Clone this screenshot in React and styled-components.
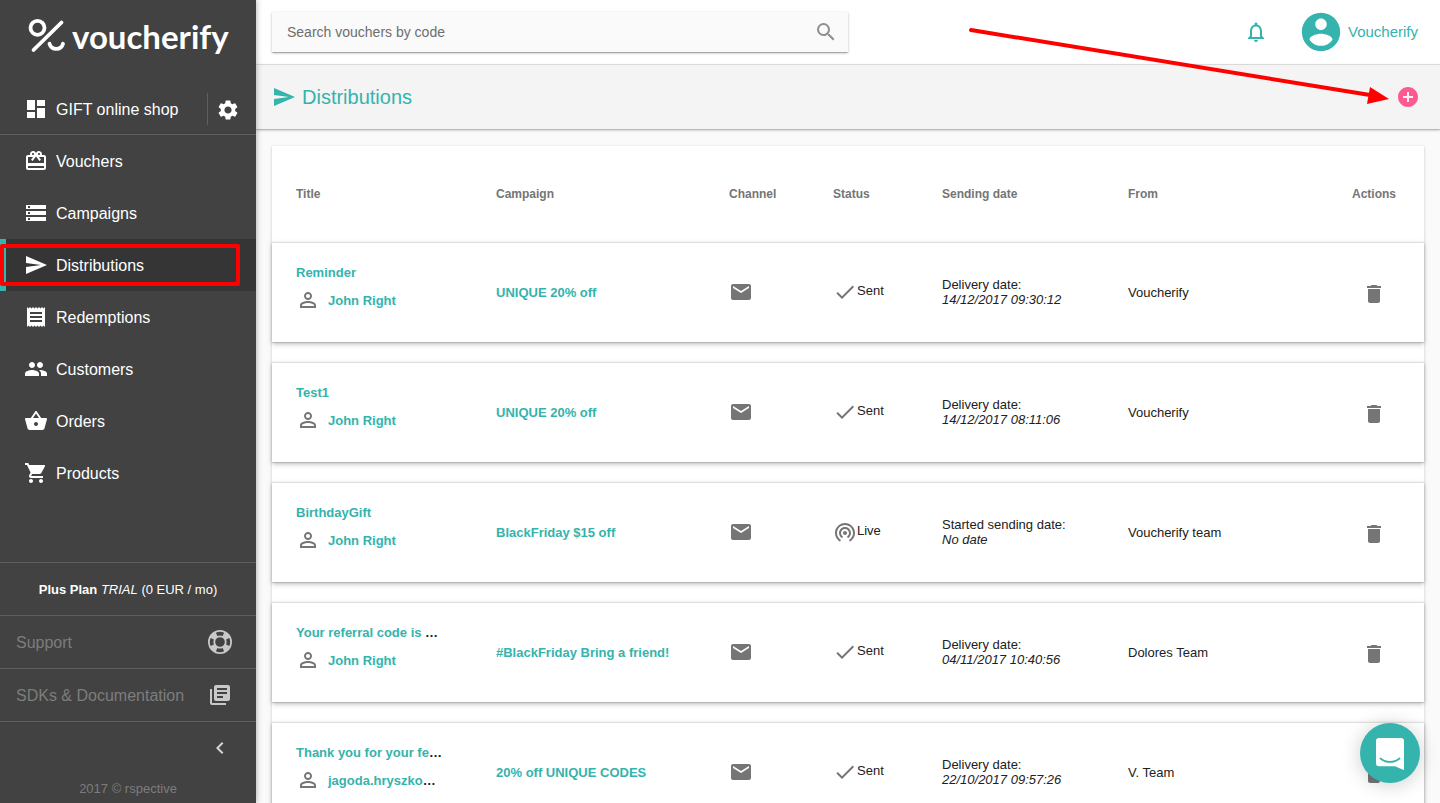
import React from "react";
import styled, { createGlobalStyle, css } from "styled-components";
import {
  MdDashboard,
  MdSettings,
  MdCardGiftcard,
  MdStorage,
  MdSend,
  MdReceipt,
  MdPeople,
  MdShoppingCart,
  MdLibraryBooks,
  MdChevronLeft,
  MdSearch,
  MdNotificationsNone,
  MdAddCircle,
  MdPersonOutline,
  MdEmail,
  MdDone,
  MdWifiTethering,
  MdDelete,
} from "react-icons/md";

const teal = "#35b3ad";
const lineDark = "#5e5e5e";

const GlobalStyle = createGlobalStyle`
  *, *::before, *::after { box-sizing: border-box; }
  body {
    margin: 0;
    background: #fafafa;
    color: #212121;
    font-family: "Liberation Sans", Arial, sans-serif;
    font-size: 13px;
    line-height: 15px;
  }
  a { color: inherit; text-decoration: none; }
  button { border: 0; padding: 0; background: none; font: inherit; color: inherit; cursor: pointer; }
  svg { display: block; flex: none; }
`;

const Shell = styled.div`
  position: relative;
  display: flex;
  height: 100vh;
  overflow: hidden;
`;

/* Sidebar */

const Sidebar = styled.aside`
  z-index: 2;
  display: flex;
  flex: none;
  flex-direction: column;
  width: 256px;
  background: #424242;
  color: #fff;
  box-shadow: 0 0 6px rgba(0, 0, 0, 0.35);
`;

const Brand = styled.a`
  display: flex;
  align-items: center;
  gap: 6px;
  height: 84px;
  padding: 0 0 12px 28px;
`;

const Wordmark = styled.span`
  font-family: Lato, sans-serif;
  font-size: 33px;
  font-weight: 700;
  line-height: 40px;
`;

const ProjectRow = styled.div`
  display: flex;
  align-items: center;
  height: 51px;
  border-bottom: 1px solid ${lineDark};
`;

const navRow = css`
  display: flex;
  align-items: center;
  gap: 8px;
  padding-left: 24px;
  font-size: 16px;
  line-height: 20px;
`;

const NavLabel = styled.span`
  padding-top: 2px;
`;

const ProjectLink = styled.a`
  ${navRow}
  flex: 1;
`;

const SettingsButton = styled.button`
  display: flex;
  align-items: center;
  height: 32px;
  padding: 2px 16px 0 8px;
  border-left: 1px solid ${lineDark};
`;

const NavList = styled.ul`
  flex: 1;
  margin: 0;
  padding: 0;
  list-style: none;
`;

const NavItem = styled.li`
  position: relative;
`;

const NavLink = styled.a`
  ${navRow}
  height: 52px;
  ${(p) =>
    p.$active &&
    css`
      background: #353535;
      box-shadow: inset 6px 0 ${teal};
    `}
`;

const Highlight = styled.span`
  position: absolute;
  inset: 5px 16px 5px 0;
  border: 4px solid #f00;
  border-radius: 2px;
  pointer-events: none;
`;

const Plan = styled.p`
  margin: 0;
  height: 53px;
  border-top: 1px solid ${lineDark};
  line-height: 54px;
  text-align: center;
`;

const HelpLink = styled.a`
  display: flex;
  align-items: center;
  justify-content: space-between;
  height: 53px;
  padding: 0 24px 0 16px;
  border-top: 1px solid ${lineDark};
  color: #7d7d7d;
  font-size: 16px;

  svg { color: #c8c8c8; }
`;

const CollapseRow = styled.div`
  display: flex;
  justify-content: flex-end;
  align-items: center;
  height: 52px;
  padding-right: 24px;
  border-top: 1px solid ${lineDark};
`;

const Copyright = styled.small`
  padding-top: 2px;
  color: #7d7d7d;
  font-size: 13px;
  line-height: 28px;
  text-align: center;
`;

/* Main area */

const Main = styled.main`
  flex: 1;
  min-width: 0;
  overflow-y: auto;
  scrollbar-width: none;
`;

const TopBar = styled.header`
  display: flex;
  align-items: center;
  justify-content: space-between;
  height: 65px;
  padding: 0 16px;
  border-bottom: 1px solid #e3e3e3;
  background: #fff;
`;

const SearchBox = styled.form`
  display: flex;
  align-items: center;
  width: 50%;
  height: 40px;
  padding: 0 10px 0 15px;
  background: #fafafa;
  box-shadow: 0 1px 3px rgba(0, 0, 0, 0.2), 0 1px 1px rgba(0, 0, 0, 0.14),
    0 2px 1px -1px rgba(0, 0, 0, 0.12);
`;

const SearchInput = styled.input`
  flex: 1;
  min-width: 0;
  padding: 0;
  border: 0;
  outline: 0;
  background: transparent;
  font: inherit;
  font-size: 14px;

  &::placeholder { color: #6e6e6e; opacity: 1; }
`;

const IconButton = styled.button`
  display: flex;
  color: ${(p) => p.$color};
`;

const Account = styled.div`
  display: flex;
  align-items: center;
  gap: 30px;
  padding-right: 6px;
`;

const Profile = styled.a`
  display: flex;
  align-items: center;
  gap: 4px;
  color: ${teal};
  font-size: 15px;
`;

const ProfileName = styled.span`
  padding-bottom: 2px;
`;

const TitleBar = styled.div`
  display: flex;
  align-items: center;
  justify-content: space-between;
  height: 64px;
  padding: 0 20px 0 16px;
  background: #f4f4f4;
  box-shadow: 0 1px 3px rgba(0, 0, 0, 0.25), 0 1px 1px rgba(0, 0, 0, 0.12);
`;

const Title = styled.h1`
  display: flex;
  align-items: center;
  gap: 6px;
  margin: 0;
  color: ${teal};
  font-size: 20px;
  font-weight: 400;
  line-height: 24px;
`;

const Card = styled.section`
  margin: 17px 16px;
  background: #fff;
  box-shadow: 0 1px 3px rgba(0, 0, 0, 0.2);
`;

const Table = styled.table`
  width: 100%;
  table-layout: fixed;
  border-spacing: 0 20px;
`;

const Col = styled.col`
  width: ${(p) => p.$w};
`;

const HeadCell = styled.th`
  height: 56px;
  padding: 0 0 0 ${(p) => (p.$first ? "24px" : "0")};
  color: #757575;
  font-size: 12px;
  text-align: ${(p) => (p.$center ? "center" : "left")};
`;

const Row = styled.tr`
  background: #fff;
  box-shadow: 0 2px 5px rgba(0, 0, 0, 0.26), 0 1px 1px rgba(0, 0, 0, 0.12);
`;

const Cell = styled.td`
  height: 100px;
  padding: 0 0 0 ${(p) => (p.$first ? "24px" : "0")};
  border-top: 1px solid #e0e0e0;
  vertical-align: middle;
`;

const BoldLink = styled.a`
  color: ${teal};
  font-weight: 700;
`;

const Ellipsis = styled.span`
  color: #212121;
`;

const TitleStack = styled.div`
  display: flex;
  flex-direction: column;
  gap: 8px;
  padding-bottom: 8px;
`;

const Person = styled.div`
  display: flex;
  align-items: center;
  gap: 8px;
  height: 24px;

  svg { color: #757575; }
`;

const Channel = styled.div`
  padding-bottom: 2px;
  color: #757575;
`;

const Status = styled.div`
  display: flex;
  align-items: center;
  padding-bottom: 2px;

  svg { color: #757575; }
`;

const StatusText = styled.span`
  padding-bottom: 2px;
`;

const Sending = styled.div`
  display: flex;
  flex-direction: column;
  padding-bottom: 2px;
`;

const DeleteButton = styled(IconButton)`
  margin: 2px auto 0;
`;

const ChatButton = styled.button`
  position: fixed;
  right: 20px;
  bottom: 20px;
  z-index: 3;
  display: flex;
  align-items: center;
  justify-content: center;
  width: 60px;
  height: 60px;
  padding-top: 2px;
  border-radius: 50%;
  background: ${teal};
  box-shadow: 0 2px 20px rgba(0, 0, 0, 0.2);
`;

const Pointer = styled.svg`
  position: absolute;
  top: 24px;
  right: 48px;
  z-index: 4;
  pointer-events: none;
`;

function LogoMark() {
  return (
    <svg width="38" height="36" viewBox="0 0 38 36" fill="none" stroke="#fff" strokeWidth="3.8" strokeLinecap="round">
      <circle cx="9.500" cy="9.800" r="7" />
      <path d="M33.500 4.500L5.500 32" />
      <path d="M21.500 25.800a7 7 0 0 0 13.500 0" />
    </svg>
  );
}

function BasketIcon({ size }) {
  return (
    <svg width={size} height={size} viewBox="0 0 24 24" fill="currentColor">
      <path d="M17.21 9l-4.38-6.56c-.19-.28-.51-.42-.83-.42-.32 0-.64.14-.83.43L6.790 9H2c-.55 0-1 .45-1 1 0 .09.01.18.04.27l2.540 9.270c.23.84 1 1.460 1.920 1.460h13c.92 0 1.690-.62 1.930-1.460l2.540-9.270L23 10c0-.55-.45-1-1-1h-4.790zM9 9l3-4.400L15 9H9zm3 8c-1.100 0-2-.9-2-2s.9-2 2-2 2 .9 2 2-.9 2-2 2z" />
    </svg>
  );
}

function AvatarIcon() {
  return (
    <svg width="46" height="46" viewBox="0 0 24 24" fill="currentColor">
      <path d="M12 2C6.480 2 2 6.480 2 12s4.480 10 10 10 10-4.480 10-10S17.520 2 12 2zm0 3c1.660 0 3 1.340 3 3s-1.340 3-3 3-3-1.340-3-3 1.340-3 3-3zm0 14.200c-2.500 0-4.710-1.280-6-3.220.03-1.990 4-3.080 6-3.080 1.990 0 5.970 1.090 6 3.080-1.290 1.940-3.500 3.220-6 3.220z" />
    </svg>
  );
}

function Lifebuoy() {
  return (
    <svg width="24" height="24" viewBox="2 2 20 20" fill="currentColor">
      <path d="M19.79,15.41C20.74,13.24 20.74,10.74 19.79,8.59L17.05,9.83C17.65,11.21 17.65,12.78 17.06,14.17L19.79,15.41M15.42,4.21C13.25,3.26 10.76,3.26 8.59,4.21L9.83,6.94C11.22,6.35 12.79,6.35 14.18,6.95L15.42,4.21M4.21,8.58C3.26,10.76 3.26,13.24 4.21,15.42L6.95,14.17C6.35,12.79 6.35,11.21 6.95,9.82L4.21,8.58M8.59,19.79C10.76,20.74 13.25,20.74 15.42,19.78L14.18,17.05C12.8,17.65 11.22,17.65 9.84,17.06L8.59,19.79M12,2A10,10 0 0,1 22,12A10,10 0 0,1 12,22A10,10 0 0,1 2,12A10,10 0 0,1 12,2M12,8A4,4 0 0,0 8,12A4,4 0 0,0 12,16A4,4 0 0,0 16,12A4,4 0 0,0 12,8Z" />
    </svg>
  );
}

function ChatIcon() {
  return (
    <svg width="28" height="32" viewBox="0 0 28 32">
      <path fill="#fff" d="M3 0h22a3 3 0 0 1 3 3v29c-3-1-6-2.500-9-3.700H3a3 3 0 0 1-3-3V3a3 3 0 0 1 3-3z" />
      <path d="M4.500 20.500c5.500 4.600 13.500 4.600 19 0" fill="none" stroke={teal} strokeWidth="1.800" strokeLinecap="round" />
    </svg>
  );
}

const navItems = [
  { label: "Vouchers", Icon: MdCardGiftcard },
  { label: "Campaigns", Icon: MdStorage },
  { label: "Distributions", Icon: MdSend, active: true },
  { label: "Redemptions", Icon: MdReceipt },
  { label: "Customers", Icon: MdPeople },
  { label: "Orders", Icon: BasketIcon },
  { label: "Products", Icon: MdShoppingCart },
];

const columns = [
  { label: "Title", width: "224px" },
  { label: "Campaign", width: "233px" },
  { label: "Channel", width: "104px" },
  { label: "Status", width: "109px" },
  { label: "Sending date", width: "186px" },
  { label: "From", width: "auto" },
  { label: "Actions", width: "100px" },
];

const distributions = [
  { title: "Reminder", person: "John Right", campaign: "UNIQUE 20% off", status: "Sent", note: "Delivery date:", date: "14/12/2017 09:30:12", from: "Voucherify" },
  { title: "Test1", person: "John Right", campaign: "UNIQUE 20% off", status: "Sent", note: "Delivery date:", date: "14/12/2017 08:11:06", from: "Voucherify" },
  { title: "BirthdayGift", person: "John Right", campaign: "BlackFriday $15 off", status: "Live", note: "Started sending date:", date: "No date", from: "Voucherify team" },
  { title: "Your referral code is …", person: "John Right", campaign: "#BlackFriday Bring a friend!", status: "Sent", note: "Delivery date:", date: "04/11/2017 10:40:56", from: "Dolores Team" },
  { title: "Thank you for your fe…", person: "jagoda.hryszko…", campaign: "20% off UNIQUE CODES", status: "Sent", note: "Delivery date:", date: "22/10/2017 09:57:26", from: "V. Team" },
];

/* A link whose shortened text ends in a dark ellipsis. */
function ShortLink({ text }) {
  const shortened = text.endsWith("…");
  return (
    <BoldLink href="#">
      {shortened ? text.slice(0, -1) : text}
      {shortened && <Ellipsis>…</Ellipsis>}
    </BoldLink>
  );
}

function DistributionRow({ item }) {
  const StatusIcon = item.status === "Live" ? MdWifiTethering : MdDone;
  return (
    <Row>
      <Cell $first>
        <TitleStack>
          <ShortLink text={item.title} />
          <Person>
            <MdPersonOutline size={24} />
            <ShortLink text={item.person} />
          </Person>
        </TitleStack>
      </Cell>
      <Cell>
        <BoldLink href="#">{item.campaign}</BoldLink>
      </Cell>
      <Cell>
        <Channel>
          <MdEmail size={24} />
        </Channel>
      </Cell>
      <Cell>
        <Status>
          <StatusIcon size={24} />
          <StatusText>{item.status}</StatusText>
        </Status>
      </Cell>
      <Cell>
        <Sending>
          <span>{item.note}</span>
          <em>{item.date}</em>
        </Sending>
      </Cell>
      <Cell>{item.from}</Cell>
      <Cell>
        <DeleteButton type="button" $color="#757575" aria-label="Delete">
          <MdDelete size={24} />
        </DeleteButton>
      </Cell>
    </Row>
  );
}

export default function App() {
  return (
    <>
      <GlobalStyle />
      <Shell>
        <Sidebar>
          <Brand href="#">
            <LogoMark />
            <Wordmark>voucherify</Wordmark>
          </Brand>
          <ProjectRow>
            <ProjectLink href="#">
              <MdDashboard size={24} />
              <NavLabel>GIFT online shop</NavLabel>
            </ProjectLink>
            <SettingsButton type="button" aria-label="Settings">
              <MdSettings size={24} />
            </SettingsButton>
          </ProjectRow>
          <NavList>
            {navItems.map(({ label, Icon, active }) => (
              <NavItem key={label}>
                <NavLink href="#" $active={active}>
                  <Icon size={24} />
                  <NavLabel>{label}</NavLabel>
                </NavLink>
                {active && <Highlight />}
              </NavItem>
            ))}
          </NavList>
          <Plan>
            <strong>Plus Plan</strong> <em>TRIAL</em> (0 EUR / mo)
          </Plan>
          <HelpLink href="#">
            Support
            <Lifebuoy />
          </HelpLink>
          <HelpLink href="#">
            SDKs &amp; Documentation
            <MdLibraryBooks size={24} />
          </HelpLink>
          <CollapseRow>
            <IconButton type="button" $color="#d5d5d5" aria-label="Collapse menu">
              <MdChevronLeft size={24} />
            </IconButton>
          </CollapseRow>
          <Copyright>2017 © rspective</Copyright>
        </Sidebar>

        <Main>
          <TopBar>
            <SearchBox role="search">
              <SearchInput type="text" placeholder="Search vouchers by code" aria-label="Search vouchers by code" />
              <IconButton type="button" $color="#8e8e8e" aria-label="Search">
                <MdSearch size={24} />
              </IconButton>
            </SearchBox>
            <Account>
              <IconButton type="button" $color={teal} aria-label="Notifications">
                <MdNotificationsNone size={24} />
              </IconButton>
              <Profile href="#">
                <AvatarIcon />
                <ProfileName>Voucherify</ProfileName>
              </Profile>
            </Account>
          </TopBar>
          <TitleBar>
            <Title>
              <MdSend size={24} />
              Distributions
            </Title>
            <IconButton type="button" $color="#ff5990" aria-label="Add distribution">
              <MdAddCircle size={24} />
            </IconButton>
          </TitleBar>
          <Card>
            <Table>
              <colgroup>
                {columns.map((c) => (
                  <Col key={c.label} $w={c.width} />
                ))}
              </colgroup>
              <thead>
                <tr>
                  {columns.map((c, i) => (
                    <HeadCell key={c.label} $first={i === 0} $center={c.label === "Actions"}>
                      {c.label}
                    </HeadCell>
                  ))}
                </tr>
              </thead>
              <tbody>
                {distributions.map((item) => (
                  <DistributionRow key={item.title} item={item} />
                ))}
              </tbody>
            </Table>
          </Card>
        </Main>

        <Pointer width="424" height="84" viewBox="0 0 424 84">
          <path d="M3 6L402 71" stroke="#f00" strokeWidth="4" strokeLinecap="round" />
          <path d="M402 63L421 75L399 80Z" fill="#f00" />
        </Pointer>
        <ChatButton type="button" aria-label="Open chat">
          <ChatIcon />
        </ChatButton>
      </Shell>
    </>
  );
}
